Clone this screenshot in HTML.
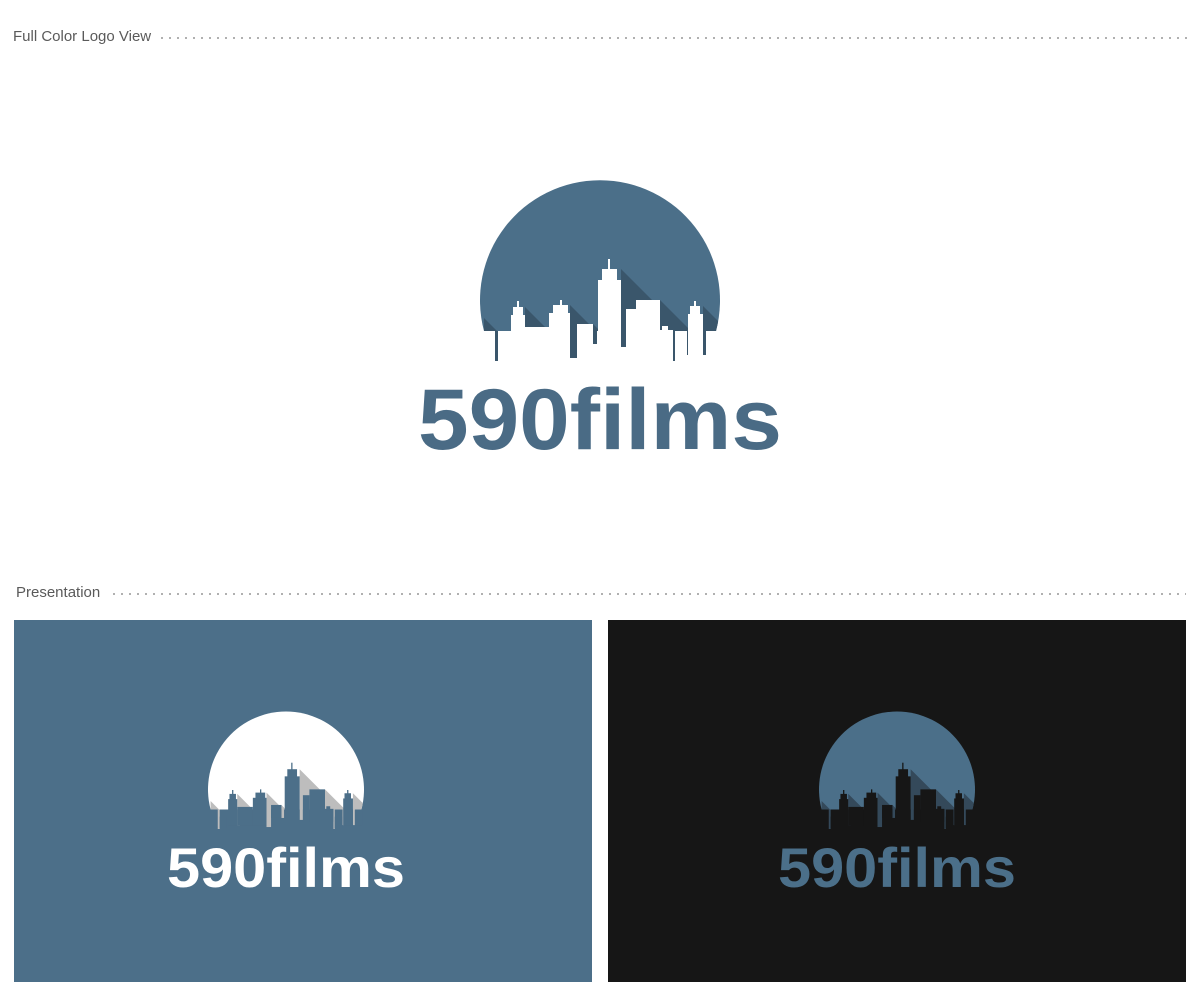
<!DOCTYPE html>
<html><head><meta charset="utf-8"><style>
html,body{margin:0;padding:0;background:#fff;width:1200px;height:1000px;overflow:hidden}
svg{position:absolute;left:0;top:0}
</style></head><body>
<svg width="1200" height="1000" viewBox="0 0 1200 1000" xmlns="http://www.w3.org/2000/svg">
<defs>
  <clipPath id="circ"><path d="M484,331 A120,120 0 1 1 716,331 Z"/></clipPath>
  <pattern id="dots" x="0" y="0" width="8" height="4" patternUnits="userSpaceOnUse"><circle cx="2" cy="2" r="0.9" fill="#777"/></pattern>
  <g id="logo">
    <path d="M484,331 A120,120 0 1 1 716,331 Z" fill="var(--c)"/>
    <g clip-path="url(#circ)" fill="var(--s)">
      <polygon points="525,307 580,362 525,362"/>
      <polygon points="570,305 630,365 570,365"/>
      <polygon points="621,269 721,369 621,369"/>
      <polygon points="660,300 730,370 660,370"/>
      <polygon points="703,306 760,363 703,363"/>
      <polygon points="508,342 530,364 508,364"/>
      <polygon points="593,324 630,361 593,361"/>
      <polygon points="673,330 700,357 673,357"/>
      <polygon points="484,318 500,334 484,334"/>
    </g>
    <g fill="var(--s)">
      <rect x="495" y="331" width="3" height="30"/>
      <rect x="525" y="331" width="4" height="24"/>
      <rect x="570" y="331" width="7" height="27"/>
      <rect x="593" y="331" width="4" height="13"/>
      <rect x="621" y="331" width="5" height="16"/>
      <rect x="673" y="331" width="2" height="30"/>
      <rect x="687" y="331" width="2" height="24"/>
      <rect x="703" y="331" width="3" height="24"/>
    </g>
    <g fill="var(--b)">
      <rect x="498" y="342" width="10" height="18"/>
      <rect x="511" y="315" width="14" height="40"/>
      <rect x="513" y="307" width="10" height="10"/>
      <rect x="517" y="301" width="2" height="8"/>
      <rect x="525" y="327" width="24" height="28"/>
      <rect x="549" y="313" width="21" height="42"/>
      <rect x="553" y="305" width="15" height="10"/>
      <rect x="560" y="300" width="2" height="7"/>
      <rect x="577" y="324" width="16" height="20"/>
      <rect x="598" y="280" width="23" height="67"/>
      <rect x="602" y="269" width="15" height="13"/>
      <rect x="608" y="259" width="2" height="12"/>
      <rect x="626" y="309" width="10" height="41"/>
      <rect x="636" y="300" width="24" height="50"/>
      <rect x="660" y="330" width="13" height="20"/>
      <rect x="662" y="326" width="6" height="6"/>
      <rect x="675" y="342" width="12" height="18"/>
      <rect x="688" y="314" width="15" height="41"/>
      <rect x="690" y="306" width="10" height="10"/>
      <rect x="694" y="301" width="2" height="7"/>
      <rect x="706" y="332" width="11" height="23"/>
    </g>
  </g>
</defs>

<text x="13" y="41" font-family="Liberation Sans, sans-serif" font-size="15" fill="#5a5a5a">Full Color Logo View</text>
<rect x="160" y="37" width="1028" height="4" fill="url(#dots)"/>
<text x="16" y="597" font-family="Liberation Sans, sans-serif" font-size="15" fill="#5a5a5a">Presentation</text>
<rect x="112" y="593" width="1074" height="4" fill="url(#dots)"/>

<g style="--c:#4b6f89;--s:#3a566b;--b:#ffffff"><use href="#logo"/></g>
<text x="418" y="449" textLength="364" lengthAdjust="spacingAndGlyphs" font-family="Liberation Sans, sans-serif" font-weight="bold" font-size="86" fill="#4a6b85">590films</text>

<rect x="14" y="620" width="578" height="362" fill="#4c6f89"/>
<g style="--c:#ffffff;--s:#bdbdbd;--b:#4c6f89" transform="translate(-104,594.35) scale(0.65)"><use href="#logo"/></g>
<text x="167" y="887" textLength="238" lengthAdjust="spacingAndGlyphs" font-family="Liberation Sans, sans-serif" font-weight="bold" font-size="56" fill="#ffffff">590films</text>

<rect x="608" y="620" width="578" height="362" fill="#161616"/>
<g style="--c:#4b6f89;--s:#34495a;--b:#161616" transform="translate(507,594.35) scale(0.65)"><use href="#logo"/></g>
<text x="778" y="887" textLength="238" lengthAdjust="spacingAndGlyphs" font-family="Liberation Sans, sans-serif" font-weight="bold" font-size="56" fill="#4b6f89">590films</text>
</svg>
</body></html>
